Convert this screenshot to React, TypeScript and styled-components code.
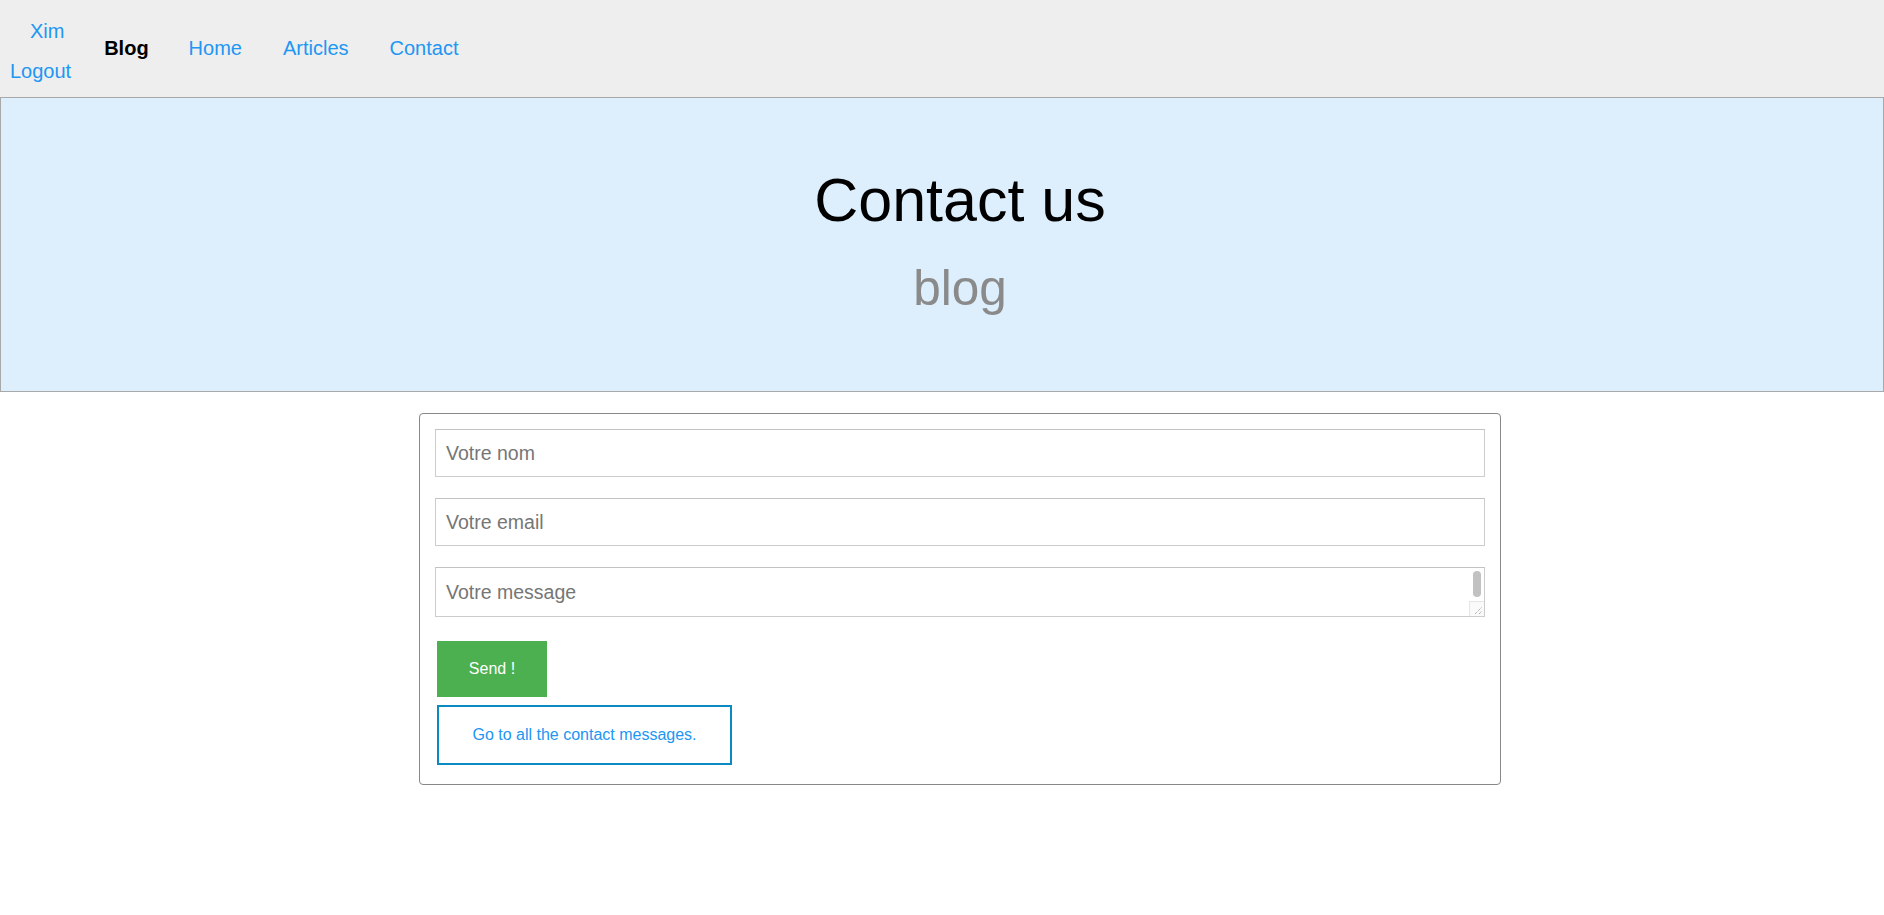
import React from "react";
import styled, { createGlobalStyle } from "styled-components";

const Global = createGlobalStyle`
  html, body { margin: 0; padding: 0; background: #ffffff; }
  body { font-family: "Liberation Sans", Arial, Helvetica, sans-serif; }
  * { box-sizing: border-box; }
`;

const Nav = styled.nav`
  height: 97px;
  background: #eeeeee;
  display: flex;
  align-items: center;
  padding-left: 10px;
  font-size: 20px;
`;

const UserBlock = styled.div`
  display: flex;
  flex-direction: column;
  align-items: flex-start;
  line-height: 40px;
  margin-top: 4px;
`;

const NavLink = styled.a<{ $indent?: number }>`
  color: #2196f3;
  text-decoration: none;
  margin-left: ${(p) => p.$indent ?? 0}px;
  cursor: pointer;
`;

const Brand = styled.span`
  font-weight: bold;
  color: #000000;
  margin-left: 33px;
  margin-right: 40px;
`;

const Links = styled.div`
  display: flex;
  gap: 41px;
`;

const Hero = styled.header`
  border: 1px solid #a9a9a9;
  background: #ddeffc;
  padding: 72px 0 78px 36px;
  text-align: center;
`;

const Title = styled.h1`
  margin: 0 0 32px;
  font-size: 61px;
  line-height: 61px;
  font-weight: normal;
  color: #000000;
`;

const Subtitle = styled.p`
  margin: 0;
  font-size: 49.5px;
  line-height: 50px;
  color: #8a8a8a;
`;

const Main = styled.main`
  display: flex;
  justify-content: center;
  padding: 21px 0 40px 36px;
`;

const FormBox = styled.form`
  width: 1082px;
  border: 1px solid #888888;
  border-radius: 4px;
  padding: 15px 14px 19px 15px;
  display: flex;
  flex-direction: column;
  align-items: flex-start;
`;

const Field = styled.input`
  width: 1050px;
  height: 48px;
  border: 1px solid #cccccc;
  border-top-color: #c2c2c2;
  padding: 0 10px;
  margin: 0 0 21px;
  font-family: inherit;
  font-size: 19.5px;
  color: #333;
  outline: none;
  &::placeholder { color: #767676; }
`;

const AreaWrap = styled.div`
  position: relative;
  width: 1050px;
  height: 50px;
`;

const Area = styled.textarea`
  display: block;
  width: 1050px;
  height: 50px;
  border: 1px solid #cccccc;
  border-top-color: #c2c2c2;
  padding: 13px 10px 0;
  margin: 0;
  font-family: inherit;
  font-size: 19.5px;
  line-height: 22px;
  resize: vertical;
  overflow-y: scroll;
  outline: none;
  &::placeholder { color: #767676; }
  &::-webkit-scrollbar { width: 15px; }
  &::-webkit-scrollbar-track { background: #fafafa; border-left: 1px solid #e6e6e6; }
  &::-webkit-scrollbar-corner { background: #fafafa; }
`;

const Thumb = styled.span`
  position: absolute;
  right: 4px;
  top: 4px;
  width: 8px;
  height: 26px;
  border-radius: 4px;
  background: #c1c1c1;
  pointer-events: none;
`;

const Grip = styled.svg`
  position: absolute;
  right: 1px;
  bottom: 1px;
  width: 15px;
  height: 15px;
  pointer-events: none;
  background: #fafafa;
  border-top: 1px solid #e6e6e6;
  border-left: 1px solid #e6e6e6;
`;

const SendButton = styled.button`
  margin: 24px 0 0 2px;
  width: 110px;
  height: 56px;
  border: none;
  background: #4caf50;
  color: #ffffff;
  font-family: inherit;
  font-size: 16px;
  cursor: pointer;
`;

const MessagesLink = styled.a`
  margin: 8px 0 0 2px;
  width: 295px;
  height: 60px;
  display: flex;
  align-items: center;
  justify-content: center;
  border: 2px solid #0a8ac0;
  color: #2196f3;
  font-size: 16px;
  text-decoration: none;
  cursor: pointer;
`;

export default function App() {
  return (
    <>
      <Global />
      <Nav>
        <UserBlock>
          <NavLink $indent={20}>Xim</NavLink>
          <NavLink>Logout</NavLink>
        </UserBlock>
        <Brand>Blog</Brand>
        <Links>
          <NavLink>Home</NavLink>
          <NavLink>Articles</NavLink>
          <NavLink>Contact</NavLink>
        </Links>
      </Nav>
      <Hero>
        <Title>Contact us</Title>
        <Subtitle>blog</Subtitle>
      </Hero>
      <Main>
        <FormBox onSubmit={(e) => e.preventDefault()}>
          <Field placeholder="Votre nom" />
          <Field placeholder="Votre email" />
          <AreaWrap>
            <Area placeholder="Votre message" />
            <Thumb />
            <Grip viewBox="0 0 14 14">
              <line x1="5" y1="12" x2="12" y2="5" stroke="#7a7a7a" strokeWidth="0.8" strokeDasharray="1 1" />
              <line x1="9" y1="12" x2="12" y2="9" stroke="#7a7a7a" strokeWidth="0.8" strokeDasharray="1 1" />
            </Grip>
          </AreaWrap>
          <SendButton type="submit">Send !</SendButton>
          <MessagesLink>Go to all the contact messages.</MessagesLink>
        </FormBox>
      </Main>
    </>
  );
}
